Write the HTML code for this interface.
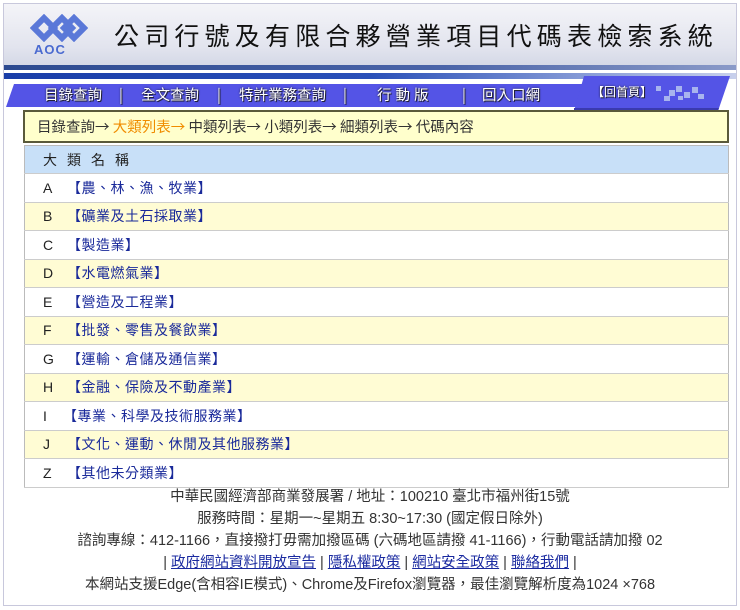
<!DOCTYPE html>
<html><head><meta charset="utf-8"><style>
body{margin:0;background:#fff;font-family:"Liberation Sans","Noto Sans CJK TC",sans-serif;}
#wrap{position:absolute;left:3px;top:3px;width:732px;height:601px;border:1px solid #c8c8dc;background:#fff;overflow:hidden}
#hdr{position:absolute;left:0;top:0;width:732px;height:62px;background:linear-gradient(180deg,#f4f4f8,#e2e4ee 70%,#d4d8e6)}
#title{position:absolute;left:110px;top:14px;font-size:25px;letter-spacing:5.2px;color:#111;font-family:"Noto Sans CJK TC",sans-serif;line-height:34px}
#aoc{position:absolute;left:30px;top:38px;font-size:13px;font-weight:bold;color:#4a6ad0;letter-spacing:1px}
.b1{position:absolute;left:0;top:61px;width:732px;height:5px;background:linear-gradient(90deg,#2c4a90,#4a64a8 60%,#8a9ac8)}
.b2{position:absolute;left:0;top:69px;width:732px;height:6px;background:linear-gradient(90deg,#1a3ea8,#2a50b8 50%,#c8d0ec)}
#nav{position:absolute;left:0;top:64px;width:732px;height:44px}
.nv{position:absolute;top:80px;color:#fff;font-size:14.5px;font-family:"Noto Sans CJK TC",sans-serif;text-shadow:0 0 2px #224,1px 1px 0 #223}
#bc{position:absolute;left:19px;top:106px;width:690px;height:29px;background:#ffffcc;border:2px solid #5a5a3a;font-size:14.5px;line-height:29px;padding-left:12px;color:#333;font-family:"Noto Sans CJK TC",sans-serif}
table{position:absolute;left:20px;top:141px;width:705px;border-collapse:collapse;border:1px solid #bbb}
td{height:27.5px;border-bottom:1px solid #ccc;font-size:14px;padding:0 0 0 18px;color:#1a2a9a;font-family:"Liberation Sans","Noto Sans CJK TC",sans-serif;letter-spacing:0.5px}
tr.h td{background:#c8e0f8;color:#222;letter-spacing:10px;height:27px}
tr.y td{background:#fffcd4}
td span{color:#222;display:inline-block;width:24px}
#ft{position:absolute;left:0;top:482px;width:732px;text-align:center;font-size:14.5px;color:#333;line-height:22px;font-family:"Liberation Sans","Noto Sans CJK TC",sans-serif}
#ft a{color:#1a2aa0;text-decoration:underline}
</style></head><body><div id="wrap">
<div id="hdr">
<svg style="position:absolute;left:26px;top:10px" width="58" height="28" viewBox="0 0 58 28"><path d="M4 14 L14 4 L24 14 L14 24 Z M22 14 L32 4 L42 14 L32 24 Z" fill="none" stroke="#5a78d8" stroke-width="6"/><path d="M34 14 L44 4 L54 14 L44 24 Z" fill="none" stroke="#5a78d8" stroke-width="6"/></svg>
<div id="aoc">AOC</div>
<div id="title">公司行號及有限合夥營業項目代碼表檢索系統</div>
</div>
<div class="b1"></div><div class="b2"></div>
<svg id="nav" viewBox="0 0 732 44" width="732" height="44"><path d="M2 39 L10 16 L580 16 L580 39 Z" fill="#5454e6"/><path d="M570 43 L580 8 L726 8 L714 43 Z" fill="#5454e6"/><path d="M570 40 L715 40 L714 43 L570 43 Z" fill="#3a3ab0"/>
<g fill="#a8b4ee"><rect x="652" y="18" width="5" height="5"/><rect x="665" y="22" width="6" height="6"/><rect x="672" y="18" width="6" height="6"/><rect x="680" y="24" width="6" height="6"/><rect x="688" y="19" width="6" height="6"/><rect x="694" y="26" width="6" height="5"/><rect x="660" y="28" width="6" height="5"/><rect x="674" y="28" width="5" height="4"/></g></svg>
<div class="nv" style="left:40px">目錄查詢</div><div class="nv" style="left:115px">|</div>
<div class="nv" style="left:137px">全文查詢</div><div class="nv" style="left:213px">|</div>
<div class="nv" style="left:235px">特許業務查詢</div><div class="nv" style="left:339px">|</div>
<div class="nv" style="left:373px;letter-spacing:4px">行動版</div><div class="nv" style="left:458px">|</div>
<div class="nv" style="left:478px">回入口網</div>
<div class="nv" style="left:588px;top:79px;font-size:12px">【回首頁】</div>
<div id="bc">目錄查詢→ <span style="color:#f08c00">大類列表→</span> 中類列表→ 小類列表→ 細類列表→ 代碼內容</div>
<table>
<tr class="h"><td>大類名稱</td></tr>
<tr><td><span>A</span>【農、林、漁、牧業】</td></tr>
<tr class="y"><td><span>B</span>【礦業及土石採取業】</td></tr>
<tr><td><span>C</span>【製造業】</td></tr>
<tr class="y"><td><span>D</span>【水電燃氣業】</td></tr>
<tr><td><span>E</span>【營造及工程業】</td></tr>
<tr class="y"><td><span>F</span>【批發、零售及餐飲業】</td></tr>
<tr><td><span>G</span>【運輸、倉儲及通信業】</td></tr>
<tr class="y"><td><span>H</span>【金融、保險及不動產業】</td></tr>
<tr><td><span style="width:20px">I</span>【專業、科學及技術服務業】</td></tr>
<tr class="y"><td><span>J</span>【文化、運動、休閒及其他服務業】</td></tr>
<tr><td><span>Z</span>【其他未分類業】</td></tr>
</table>
<div id="ft">中華民國經濟部商業發展署 / 地址：100210 臺北市福州街15號<br>服務時間：星期一~星期五 8:30~17:30 (國定假日除外)<br>諮詢專線：412-1166，直接撥打毋需加撥區碼 (六碼地區請撥 41-1166)，行動電話請加撥 02<br>| <a>政府網站資料開放宣告</a> | <a>隱私權政策</a> | <a>網站安全政策</a> | <a>聯絡我們</a> |<br>本網站支援Edge(含相容IE模式)、Chrome及Firefox瀏覽器，最佳瀏覽解析度為1024 ×768</div>
</div></body></html>
